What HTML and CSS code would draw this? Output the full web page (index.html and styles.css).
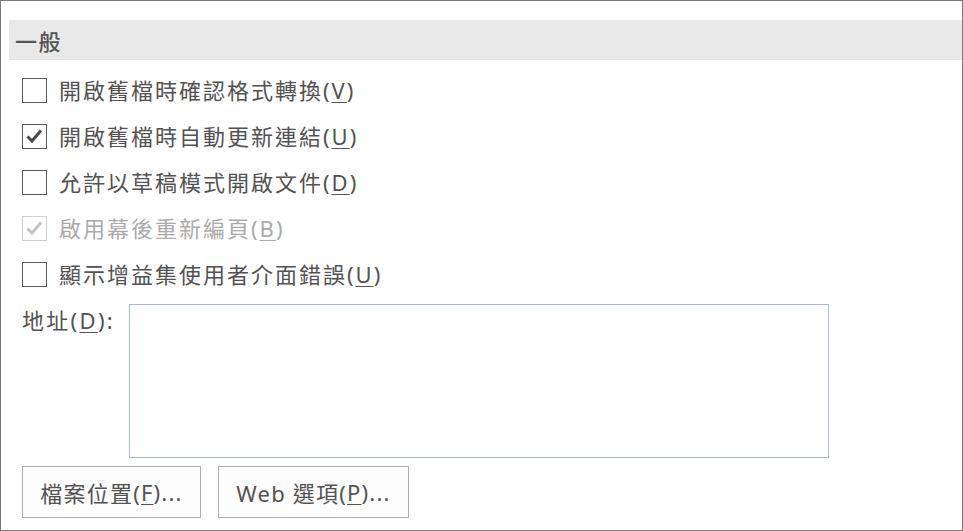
FILE: index.html
```html
<!DOCTYPE html>
<html lang="zh-Hant">
<head>
<meta charset="utf-8">
<title>一般</title>
<link rel="stylesheet" href="styles.css">
</head>
<body>
<div class="frame">
  <div class="section-head">一般</div>
  <div class="options">
    <label class="opt">
      <span class="box"></span>
      <span class="txt">開啟舊檔時確認格式轉換(<u>V</u>)</span>
    </label>
    <label class="opt">
      <span class="box"><svg viewBox="0 0 23 23" class="tick"><path d="M4.5 11.5 L9 16 L18 5.5"/></svg></span>
      <span class="txt">開啟舊檔時自動更新連結(<u>U</u>)</span>
    </label>
    <label class="opt">
      <span class="box"></span>
      <span class="txt">允許以草稿模式開啟文件(<u>D</u>)</span>
    </label>
    <label class="opt disabled">
      <span class="box"><svg viewBox="0 0 23 23" class="tick"><path d="M4.5 11.5 L9 16 L18 5.5"/></svg></span>
      <span class="txt">啟用幕後重新編頁(<u>B</u>)</span>
    </label>
    <label class="opt">
      <span class="box"></span>
      <span class="txt">顯示增益集使用者介面錯誤(<u>U</u>)</span>
    </label>
  </div>
  <div class="addr">
    <span class="addr-label">地址(<u>D</u>):</span>
    <div class="addr-field"></div>
  </div>
  <div class="buttons">
    <div class="btn btn-file">檔案位置(<u>F</u>)...</div>
    <div class="btn btn-web">Web 選項(<u>P</u>)...</div>
  </div>
</div>
</body>
</html>
```

FILE: styles.css
```css
html, body {
  margin: 0;
  padding: 0;
  background: #ffffff;
}
body {
  font-family: "Noto Sans", "Noto Sans CJK TC", sans-serif;
  color: #525252;
}
.frame {
  width: 963px;
  height: 531px;
  box-sizing: border-box;
  border: 1px solid #7a7a7a;
  display: flex;
  flex-direction: column;
}
.section-head {
  margin: 19px 0 0 8px;
  height: 39px;
  background: #e9e9e9;
  border-bottom: 1px solid #e2e2e2;
  padding-left: 6px;
  display: flex;
  align-items: center;
  font-size: 22px;
  font-weight: 500;
  color: #555555;
  font-family: "Noto Sans CJK TC", sans-serif;
  letter-spacing: 1.5px;
}
.options {
  margin-top: 7px;
  display: flex;
  flex-direction: column;
}
.opt {
  height: 46px;
  display: flex;
  align-items: center;
  padding-left: 21px;
  gap: 12px;
}
.box {
  width: 25px;
  height: 25px;
  box-sizing: border-box;
  border: 1px solid #5a5a5a;
  background: #ffffff;
  display: block;
  flex: none;
}
.tick {
  display: block;
  width: 23px;
  height: 23px;
}
.tick path {
  fill: none;
  stroke: #4a4a4a;
  stroke-width: 3;
}
.txt {
  font-size: 22px;
  letter-spacing: 2px;
  line-height: 1;
}
u {
  text-decoration-thickness: 1px;
  text-underline-offset: 3px;
}
.disabled .box {
  border-color: #d0d0d0;
}
.disabled .tick path {
  stroke: #c4c4c4;
}
.disabled .txt {
  color: #ababab;
}
.addr {
  margin-top: 7px;
  display: flex;
  align-items: flex-start;
  padding-left: 21px;
}
.addr-label {
  width: 107px;
  flex: none;
  font-size: 22px;
  letter-spacing: 2.3px;
  line-height: 32px;
}
.addr-field {
  width: 700px;
  height: 154px;
  box-sizing: border-box;
  border: 1px solid #abbad0;
}
.buttons {
  margin-top: 8px;
  padding-left: 21px;
  display: flex;
  gap: 17px;
}
.btn {
  height: 52px;
  box-sizing: border-box;
  border: 1px solid #adadad;
  background: #fdfdfd;
  display: flex;
  align-items: center;
  justify-content: center;
  font-size: 22px;
  letter-spacing: 1.2px;
}
.btn-file { width: 179px; }
.btn-web { width: 191px; }
```
